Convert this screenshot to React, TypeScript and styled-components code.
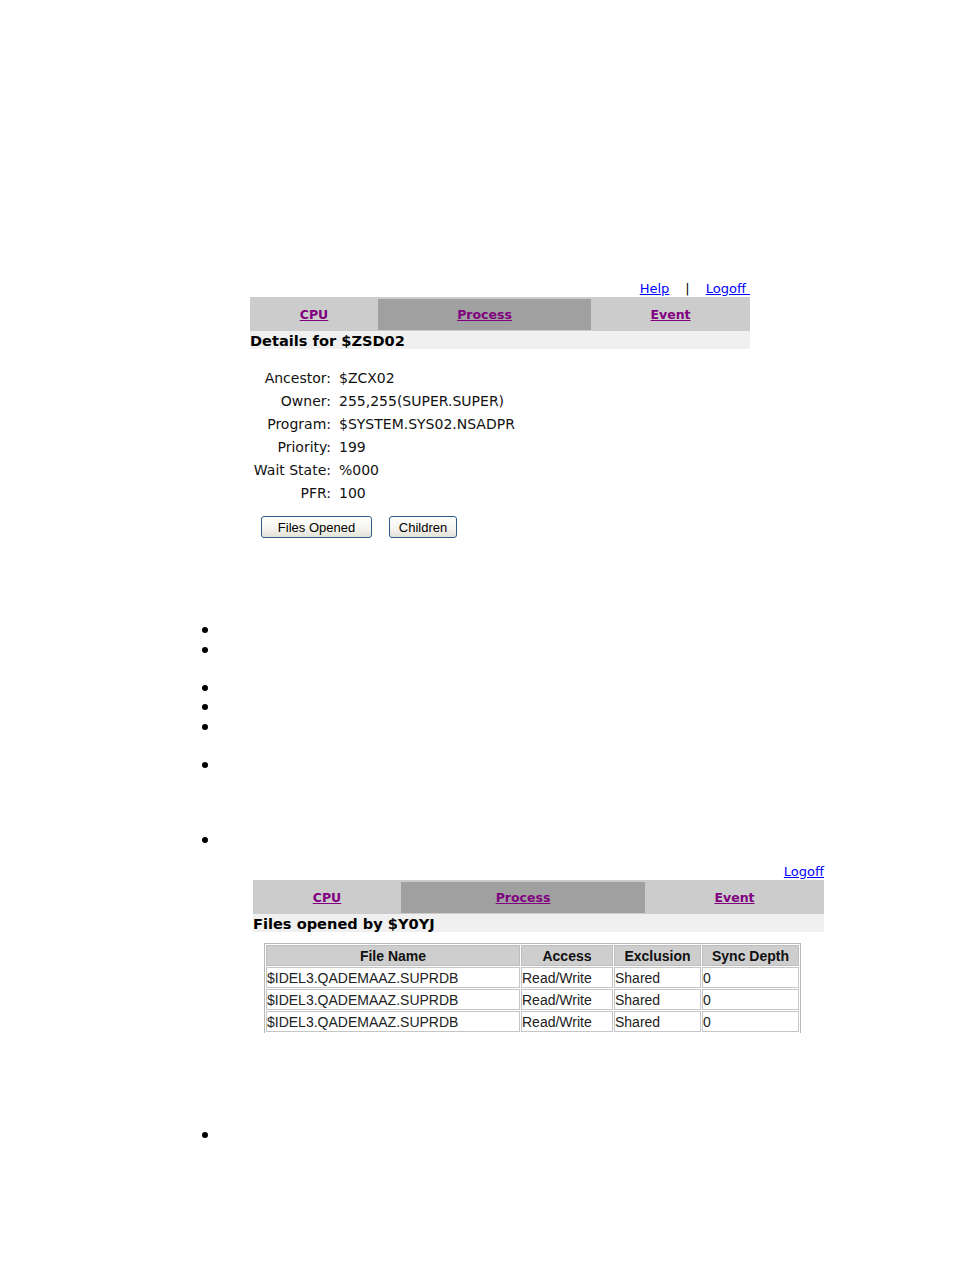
import React from 'react';
import styled, { createGlobalStyle } from 'styled-components';

const GlobalStyle = createGlobalStyle`
  html, body {
    margin: 0;
    padding: 0;
    background: #ffffff;
  }
  body {
    font-family: "DejaVu Sans", Verdana, sans-serif;
    color: #000;
  }
`;

const Page = styled.div`
  width: 954px;
  min-height: 1270px;
  padding-top: 281px;
  box-sizing: border-box;
`;

const Section = styled.div<{ $left: number; $width: number; $top?: number }>`
  margin-left: ${(p) => p.$left}px;
  margin-top: ${(p) => p.$top || 0}px;
  width: ${(p) => p.$width}px;
`;

const TopLinks = styled.div`
  height: 16px;
  display: flex;
  justify-content: flex-end;
  align-items: center;
  gap: 16px;
  font-size: 13px;
  line-height: 16px;
`;

const TopLink = styled.a`
  color: #0000ff;
  text-decoration: underline;
`;

const Sep = styled.span`
  color: #000;
`;

const Nav = styled.div`
  height: 34px;
  box-sizing: border-box;
  padding: 2px 0 1px;
  background: #cccccc;
  display: flex;
`;

const NavCell = styled.div<{ $width?: number; $active?: boolean }>`
  flex: ${(p) => (p.$width ? `0 0 ${p.$width}px` : '1 1 auto')};
  display: flex;
  align-items: center;
  justify-content: center;
  background: ${(p) => (p.$active ? '#a0a0a0' : 'transparent')};
`;

const NavLink = styled.a`
  color: #800080;
  font-size: 12.5px;
  font-weight: bold;
  text-decoration: underline;
`;

const Title = styled.div`
  height: 18px;
  line-height: 20px;
  background: #f0f0f0;
  font-size: 14.6px;
  font-weight: bold;
  white-space: nowrap;
`;

const Details = styled.div`
  display: grid;
  grid-template-columns: 81px auto;
  column-gap: 8px;
  padding-top: 18px;
  font-size: 14px;
  line-height: 23px;
  color: #111;
`;

const Label = styled.div`
  text-align: right;
  white-space: nowrap;
`;

const Value = styled.div`
  white-space: nowrap;
`;

const Buttons = styled.div`
  display: flex;
  gap: 17px;
  margin: 11px 0 0 11px;
`;

const Button = styled.button<{ $width: number }>`
  width: ${(p) => p.$width}px;
  height: 22px;
  padding: 0;
  border: 1px solid #2f5a8a;
  border-radius: 3px;
  background: linear-gradient(#ffffff, #f4f3ee 60%, #e3e1d6);
  font-family: "Liberation Sans", Arial, sans-serif;
  font-size: 13px;
  color: #000;
`;

const Bullets = styled.ul<{ $top: number }>`
  margin: ${(p) => p.$top}px 0 0 0;
  padding-left: 221px;
  list-style: disc;
  font-size: 20px;
  line-height: 19px;
`;

const Bullet = styled.li<{ $gap?: number }>`
  height: 19px;
  margin-top: ${(p) => p.$gap || 0}px;
`;

const TableClip = styled.div`
  margin: 11px 0 0 11px;
  height: 90px;
  overflow: hidden;
`;

const Table = styled.table`
  width: 537px;
  border-collapse: separate;
  border-spacing: 1px;
  border: 1px solid #b8b8b8;
  font-family: "Liberation Sans", Arial, sans-serif;
  font-size: 14px;
  table-layout: fixed;
`;

const Th = styled.th`
  height: 19px;
  padding: 0 2px;
  background: #cecece;
  border: 1px solid #bdbdbd;
  font-weight: bold;
  text-align: center;
  color: #111;
  white-space: nowrap;
`;

const Td = styled.td`
  height: 19px;
  padding: 0;
  background: #ffffff;
  border: 1px solid #c6c6c6;
  color: #222;
  white-space: nowrap;
`;

const details: [string, string][] = [
  ['Ancestor:', '$ZCX02'],
  ['Owner:', '255,255(SUPER.SUPER)'],
  ['Program:', '$SYSTEM.SYS02.NSADPR'],
  ['Priority:', '199'],
  ['Wait State:', '%000'],
  ['PFR:', '100'],
];

const files = [
  ['$IDEL3.QADEMAAZ.SUPRDB', 'Read/Write', 'Shared', '0'],
  ['$IDEL3.QADEMAAZ.SUPRDB', 'Read/Write', 'Shared', '0'],
  ['$IDEL3.QADEMAAZ.SUPRDB', 'Read/Write', 'Shared', '0'],
];

const App = () => (
  <Page>
    <GlobalStyle />
    <Section $left={250} $width={500}>
      <TopLinks>
        <TopLink href="#">Help</TopLink>
        <Sep>|</Sep>
        <TopLink href="#">Logoff&nbsp;</TopLink>
      </TopLinks>
      <Nav>
        <NavCell $width={128}>
          <NavLink href="#">CPU</NavLink>
        </NavCell>
        <NavCell $width={213} $active>
          <NavLink href="#">Process</NavLink>
        </NavCell>
        <NavCell>
          <NavLink href="#">Event</NavLink>
        </NavCell>
      </Nav>
      <Title>Details for $ZSD02</Title>
      <Details>
        {details.map(([k, v]) => (
          <React.Fragment key={k}>
            <Label>{k}</Label>
            <Value>{v}</Value>
          </React.Fragment>
        ))}
      </Details>
      <Buttons>
        <Button $width={111}>Files Opened</Button>
        <Button $width={68}>Children</Button>
      </Buttons>
    </Section>

    <Bullets $top={82}>
      <Bullet />
      <Bullet $gap={1} />
      <Bullet $gap={19} />
      <Bullet />
      <Bullet $gap={1} />
      <Bullet $gap={19} />
      <Bullet $gap={56} />
    </Bullets>

    <Section $left={253} $width={571} $top={15}>
      <TopLinks>
        <TopLink href="#">Logoff</TopLink>
      </TopLinks>
      <Nav>
        <NavCell $width={148}>
          <NavLink href="#">CPU</NavLink>
        </NavCell>
        <NavCell $width={244} $active>
          <NavLink href="#">Process</NavLink>
        </NavCell>
        <NavCell>
          <NavLink href="#">Event</NavLink>
        </NavCell>
      </Nav>
      <Title>Files opened by $Y0YJ</Title>
      <TableClip>
        <Table>
          <colgroup>
            <col style={{ width: 254 }} />
            <col style={{ width: 92 }} />
            <col style={{ width: 87 }} />
            <col />
          </colgroup>
          <thead>
            <tr>
              <Th>File Name</Th>
              <Th>Access</Th>
              <Th>Exclusion</Th>
              <Th>Sync Depth</Th>
            </tr>
          </thead>
          <tbody>
            {files.map((r, i) => (
              <tr key={i}>
                {r.map((c, j) => (
                  <Td key={j}>{c}</Td>
                ))}
              </tr>
            ))}
          </tbody>
        </Table>
      </TableClip>
    </Section>

    <Bullets $top={92}>
      <Bullet />
    </Bullets>
  </Page>
);

export default App;
